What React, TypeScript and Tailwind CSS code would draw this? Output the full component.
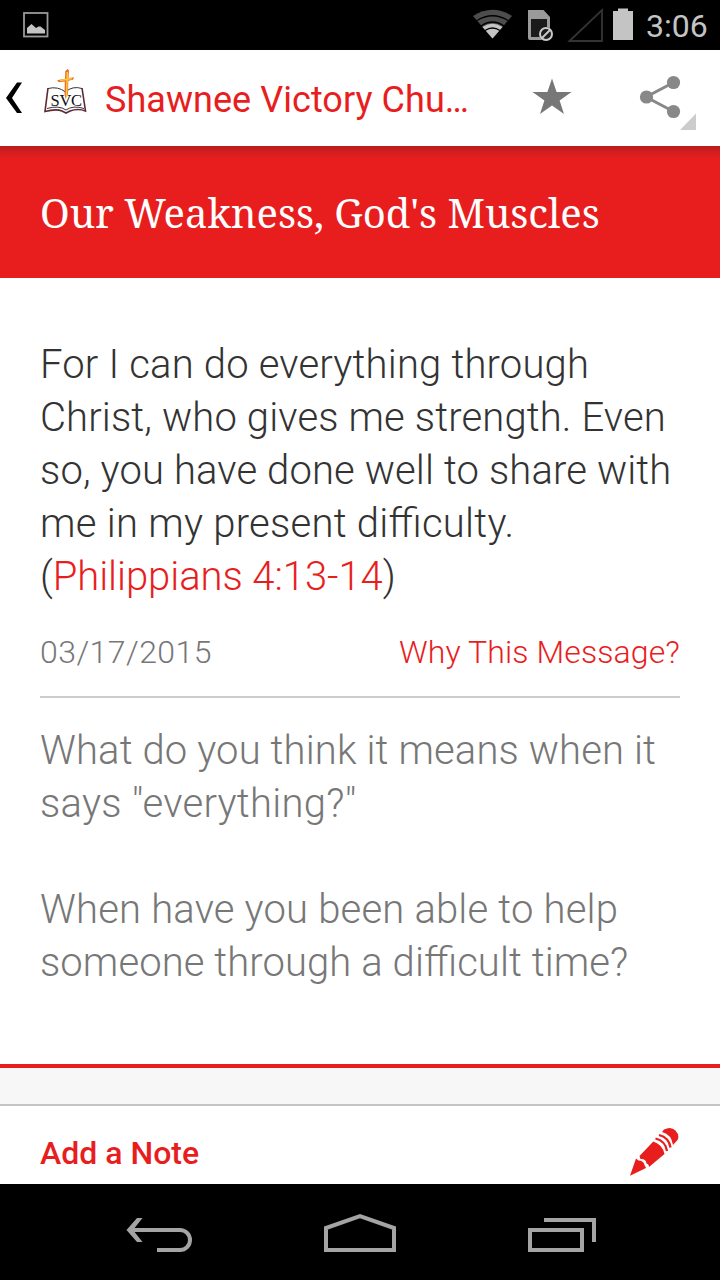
import type { ReactNode } from 'react'

interface TextLine {
  content: ReactNode
  className: string
}

interface TextLinesProps {
  lines: TextLine[]
}

const verse: TextLine[] = [
  { content: 'For I can do everything through', className: 'tracking-[0.18px]' },
  { content: 'Christ, who gives me strength. Even', className: 'tracking-[0.13px]' },
  { content: 'so, you have done well to share with', className: 'tracking-[0.12px]' },
  { content: 'me in my present difficulty.', className: 'tracking-[0.26px]' },
  {
    content: (
      <>
        (<a className="text-[#e81e1e]">Philippians 4:13-14</a>)
      </>
    ),
    className: 'tracking-[-0.06px]',
  },
]

const firstQuestion: TextLine[] = [
  { content: 'What do you think it means when it', className: 'tracking-[0.12px]' },
  { content: 'says "everything?"', className: 'tracking-[0.28px]' },
]

const secondQuestion: TextLine[] = [
  { content: 'When have you been able to help', className: 'tracking-[0.18px]' },
  { content: 'someone through a difficult time?', className: 'tracking-[0.08px]' },
]

function TextLines({ lines }: TextLinesProps) {
  return (
    <>
      {lines.map((line, index) => (
        <span
          key={index}
          className={
            "block h-[53px] whitespace-nowrap [font-feature-settings:'liga'_1] " + line.className
          }
        >
          {line.content}
        </span>
      ))}
    </>
  )
}

function StatusBar() {
  return (
    <header className="flex h-[50px] items-center justify-between bg-black pr-[11px] pl-[23px]">
      <svg width="26" height="26" viewBox="0 0 26 26">
        <rect x="1" y="1" width="23.5" height="23.5" fill="none" stroke="#999" strokeWidth="1.8" />
        <path d="M4 21.500V16l4.500-4 4.500 4 2.500-1.500 2 0 4.500 3.500v3.500z" fill="#c4c4c4" />
      </svg>
      <div className="flex items-center">
        <svg width="164" height="50" viewBox="0 0 164 50">
          <path d="M1 16Q20.500 3.500 40 16L20.500 38.500z" fill="#4d4d4d" />
          <path d="M10.500 27Q20.500 20.500 30.500 27L20.500 38.500z" fill="#c4c4c4" />
          <g fill="none" stroke="#000" strokeWidth="1.300">
            <path d="M5 20.500Q20.500 11 36 20.500" />
            <path d="M9 26Q20.500 18 32 26" />
            <path d="M13 30.500Q20.500 25.500 28 30.500" />
          </g>
          <path d="M56 10h15.500l6.500 7v23H58q-2 0-2-2z" fill="#9a9a9a" />
          <path d="M59 19h16v18H59z" fill="#1a1a1a" />
          <circle cx="74" cy="34" r="7" fill="#1a1a1a" />
          <circle cx="74" cy="34" r="6" fill="#1a1a1a" stroke="#c9c9c9" strokeWidth="2" />
          <path d="m70 38 8-8" stroke="#c9c9c9" strokeWidth="2" />
          <path d="M97.500 41 130 10v31z" fill="none" stroke="#333" strokeWidth="1.800" />
          <path d="M141 11h5V8.500h10V11h5v29h-20z" fill="#c4c4c4" />
        </svg>
        <span className="ml-2.5 w-[63px] pt-0.5 text-[32px] leading-[50px] whitespace-nowrap text-[#c4c4c4]">
          3:06
        </span>
      </div>
    </header>
  )
}

function ChurchLogo() {
  return (
    <svg className="mb-[10px] ml-[22px]" width="44" height="48" viewBox="0 0 44 48">
      <path
        d="M4 19 1 42.500q11-3 17-.5l4 2 4-2q8-3 15.500 0L38 19"
        fill="#fff"
        stroke="#5c2a32"
        strokeWidth="1.600"
      />
      <path
        d="M4 19.500q10-2.500 17.500 3.500 7-6.500 16.500-3.500M3 39.500q12-3.500 19 1.500 7-5 18-1.500"
        fill="none"
        stroke="#333"
        strokeWidth="1"
      />
      <path
        d="M23.700 0 25 1.500 24.500 9l5.500-.8-1 2.500-4.700 1L24 25l-2.500 5-1-5 .3-12.500L15 13.300l-2-2 8-1.600.3-7.700z"
        fill="#e8702a"
      />
      <path d="M23.300 3 22.500 28M16 11.500l12-2" fill="none" stroke="#ffc83d" strokeWidth="1.500" />
      <text
        x="6.500"
        y="36.500"
        textLength="31.500"
        fontFamily="Liberation Serif, serif"
        fontSize="16.500"
        fill="#111"
      >
        SVC
      </text>
    </svg>
  )
}

function ActionBar() {
  return (
    <nav className="flex h-24 items-center bg-white">
      <svg className="ml-1.5" width="16" height="32" viewBox="0 0 16 32">
        <path d="M11 .5h5L6 16l10 15h-5L0 16z" fill="#000" />
      </svg>
      <ChurchLogo />
      <h1 className="ml-[17px] w-[365px] pt-1 text-[36px] leading-[92px] tracking-[0.05px] whitespace-nowrap text-[#e81e1e]">
        Shawnee Victory Chu…
      </h1>
      <svg className="ml-[61px]" width="42" height="96" viewBox="0 0 42 96">
        <path
          d="m21 28.500 4.600 13.500H40.500L28.600 50.500 33 64 21 55.500 9 64l4.400-13.500L1.500 42h14.900z"
          fill="#777"
        />
      </svg>
      <svg className="ml-[65px]" width="60" height="96" viewBox="0 0 60 96">
        <path d="M35.500 32.500 8 47l27.500 14.500" fill="none" stroke="#888" strokeWidth="3" />
        <g fill="#888">
          <circle cx="35.500" cy="32.500" r="6.600" />
          <circle cx="8.500" cy="47" r="6.600" />
          <circle cx="35.500" cy="61.500" r="6.600" />
        </g>
        <path d="M58 63.500V80H42z" fill="#ccc" />
      </svg>
    </nav>
  )
}

function PencilIcon() {
  return (
    <svg width="50" height="50" viewBox="0 0 50 50">
      <g fill="#e81e1e">
        <path d="M0 48.700 6 31.500l2.500 2q5 0 6 4.500l1.500 3z" />
        <path d="M9.500 29 23.300 14.500q9.200 3 11.200 12.500L19 40q0-3-2.500-3.500-.5-5-6-4.500z" />
        <path d="M34 2.500q7-3.500 11.500 1 4.500 5 2 9.500L43 18Q41.500 7.500 32 5z" />
      </g>
      <g fill="none" stroke="#e81e1e" strokeWidth="2.300">
        <path d="M25.500 11.500q10 2.500 11.500 12.500" />
        <path d="M29 8q10 2.500 11.500 12.500" />
      </g>
    </svg>
  )
}

function NavigationBar() {
  return (
    <footer className="flex h-24 items-center bg-black text-[#a4a4a4]">
      <svg width="720" height="96" viewBox="0 0 720 96">
        <g fill="none" stroke="currentColor" strokeWidth="4">
          <path d="M157 66h23a10 10 0 0 0 0-20h-48" />
          <path d="M326 66V44l34-12 34 12v22z" />
          <path d="M544 36h50v22M530 46h52v20h-52z" />
        </g>
        <path d="M137 34h5.500l-9.500 12 9.500 12H137l-10.500-12z" fill="currentColor" />
      </svg>
    </footer>
  )
}

export default function App() {
  return (
    <div className="flex h-[1280px] w-[720px] flex-col overflow-hidden bg-white font-['Roboto',sans-serif]">
      <StatusBar />
      <ActionBar />

      <section className="h-[132px] bg-[#e81e1e] bg-linear-to-b from-[#bd1d1d] via-[#e81e1e] via-10% to-[#e81e1e] px-10">
        <h2 className="font-['Droid_Serif','Noto_Serif','DejaVu_Serif_Condensed',serif] text-[40px] leading-[134px] tracking-[-0.04px] whitespace-nowrap text-white">
          Our Weakness, God's Muscles
        </h2>
      </section>

      <main className="flex h-[786px] flex-col px-10 pt-[60px] font-light">
        <p className="text-[40px] leading-[53px] text-[#333]">
          <TextLines lines={verse} />
        </p>
        <div className="mt-[15px] flex h-20 justify-between border-b-2 border-[#ccc] pt-[9px] text-[32px] leading-[50px] whitespace-nowrap">
          <span className="tracking-[0.45px] text-[#777]">03/17/2015</span>
          <a className="tracking-[0.1px] text-[#e81e1e]">Why This Message?</a>
        </div>
        <div className="mt-[26px] text-[40px] leading-[53px] text-[#777]">
          <p className="mb-[53px]">
            <TextLines lines={firstQuestion} />
          </p>
          <p>
            <TextLines lines={secondQuestion} />
          </p>
        </div>
      </main>

      <div className="h-[42px] border-t-4 border-b-2 border-t-[#e81e1e] border-b-[#c4c4c4] bg-[#f7f7f7]" />
      <section className="flex h-[78px] items-center justify-between px-10">
        <span className="pt-4 text-[32px] font-medium text-[#e81e1e]">Add a Note</span>
        <div className="pt-3.5">
          <PencilIcon />
        </div>
      </section>
      <NavigationBar />
    </div>
  )
}
